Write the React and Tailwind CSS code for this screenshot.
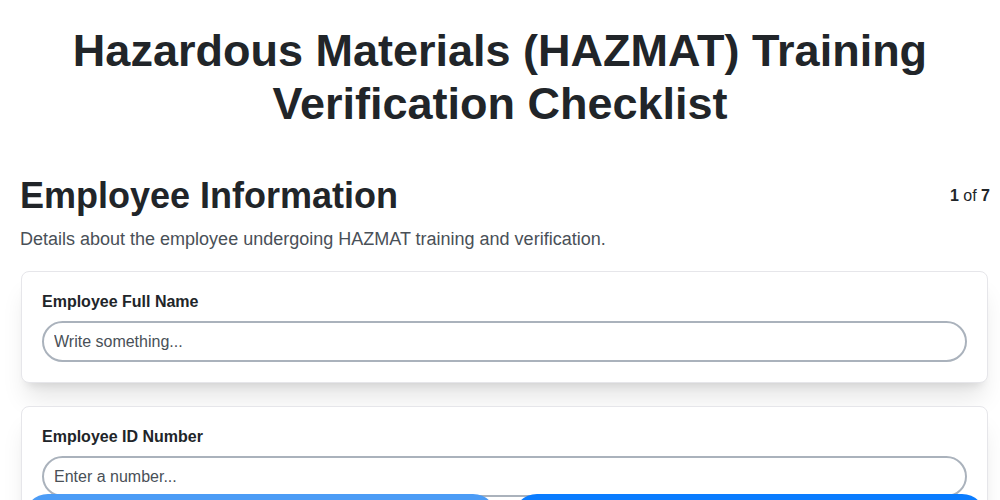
import React from 'react';

const fields = [
  { label: 'Employee Full Name', placeholder: 'Write something...', type: 'text' },
  { label: 'Employee ID Number', placeholder: 'Enter a number...', type: 'number' },
  { label: 'Job Title / Position', placeholder: 'Write something...', type: 'text' },
];

export default function App() {
  return (
    <div className="min-h-screen bg-white text-[#212529]" style={{ fontFamily: '"Liberation Sans", Arial, sans-serif' }}>
      <h1 className="pt-6 px-5 text-center text-[45px] font-bold leading-[53px]">
        Hazardous Materials (HAZMAT) Training Verification Checklist
      </h1>

      <div className="pl-5 pr-[10px] pt-[46px] pb-24">
        <div className="flex items-start justify-between">
          <h2 className="text-[36px] font-bold leading-10">Employee Information</h2>
          <div className="pt-2 text-base">
            <span className="font-bold">1</span> of <span className="font-bold">7</span>
          </div>
        </div>
        <p className="mt-[9px] text-lg leading-7 text-[#495057]">
          Details about the employee undergoing HAZMAT training and verification.
        </p>

        <div className="mt-[18px] ml-px mr-[2px] flex flex-col gap-[23px]">
          {fields.map((f) => (
            <div key={f.label} className="rounded-lg border border-[#e6e6ea] bg-white p-5 shadow-xl">
              <label className="block text-base font-bold leading-5 mb-[9px]">{f.label}</label>
              <input
                type={f.type}
                placeholder={f.placeholder}
                className="block w-full h-[41px] rounded-full border-2 border-[#aab2bc] px-[10px] text-base text-[#212529] placeholder:text-[#495057] outline-none"
              />
            </div>
          ))}
        </div>
      </div>

      <div className="fixed left-0 right-0 top-[494px] flex gap-4 pl-[24px] pr-[14px]">
        <button className="flex-1 h-12 rounded-full bg-[#4c9cf6] text-white font-bold">Previous</button>
        <button className="flex-1 h-12 rounded-full bg-[#0a7cff] text-white font-bold">Next</button>
      </div>
    </div>
  );
}
